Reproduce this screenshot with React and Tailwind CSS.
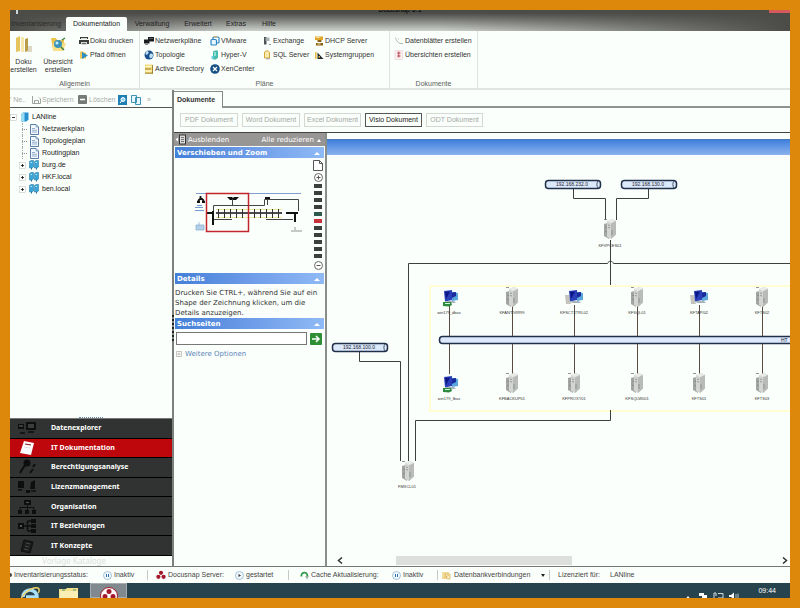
// App.jsx
import React from 'react';

const PageIcon = ({ className = 'h-[11px] w-[9px]' }) => (
  <svg className={className} viewBox="0 0 9 11">
    <path d="M.5.5h5.5l2.500 2.500v7.500H.5z" fill="#f2f8ff" stroke="#4a6f9c" strokeWidth=".9" />
    <path d="M6 .5V3h2.500M2 4.500h3M2 6.200h5M2 8h5" fill="none" stroke="#6f8fb5" strokeWidth=".7" />
  </svg>
);

const DomainIcon = () => (
  <svg className="h-[10px] w-[10px]" viewBox="0 0 10 10">
    <path d="M.5 1.500 2 .5h2.500v6.500L3 8H.5z" fill="#3aa6d8" stroke="#1d6fa0" strokeWidth=".5" />
    <path d="M5.500 1.500 7 .5h2.500v6.500L8 8H5.500z" fill="#3aa6d8" stroke="#1d6fa0" strokeWidth=".5" />
    <path d="M1.500 2.500h1.500M6.500 2.500H8" stroke="#c9f0ff" strokeWidth=".9" />
    <path d="M2.500 8v1.500M7.500 8v1.500" stroke="#2b6b90" />
  </svg>
);

const RootIcon = () => (
  <svg className="h-[10px] w-[9px]" viewBox="0 0 9 10">
    <path d="M1 2.500 3 .5h5.500v7l-2 2H1z" fill="#2791cf" />
    <path d="M1 2.500 3 .5h1.500v9H1z" fill="#9bdcf5" />
  </svg>
);

// small ribbon icons, all on a 10x10 grid
const ribbonIcons = {
  print: (
    <>
      <path d="M1 1h8v2H1zM0 4h10v4H0z" fill="#3b3f3c" />
      <path d="M2 2h6v1.200H2zM2 6h6v3H2z" fill="#d5dad6" />
      <path d="M3 7.500h4" stroke="#333" strokeWidth=".7" />
    </>
  ),
  path: (
    <>
      <path d="M1 1.500h3l1 1h2v6H1z" fill="#e9c75a" />
      <path d="m3 2 6 3.500L3 9z" fill="#2c8fc4" />
    </>
  ),
  network: (
    <>
      <path d="M4 1h6v4.500H4zM0 3.500h5.500V7.500H0z" fill="#1a1e1e" />
      <path d="M1 8.500h3" stroke="#8a9090" />
      <path d="M5 2h4v1H5z" fill="#565f66" />
    </>
  ),
  globe: (
    <>
      <circle cx="5" cy="5" r="4.500" fill="#16508f" />
      <path d="M3 1c2 0 2 2 1 3S1.500 5 1.500 4 2 1.500 3 1M6 4c2-1 3 0 3 1.500S7 9 6 8s-1-3 0-4" fill="#bfe0f2" />
    </>
  ),
  directory: (
    <>
      <path d="M1 .5h7.500v9H1z" fill="#f3d873" />
      <path d="M1 9.200h8M8.500 1v8.500M1 5h6" stroke="#8a6d1b" strokeWidth=".8" />
      <path d="M1.500 2.500h6M1.500 7h6" stroke="#fff7cf" strokeWidth="1.500" />
    </>
  ),
  vmware: (
    <>
      <rect x="3" y="1" width="6" height="6" rx="1" fill="none" stroke="#2c86c3" strokeWidth="1.200" />
      <rect x="1" y="3.500" width="5.500" height="5.500" rx="1" fill="#eaf6ff" stroke="#2c86c3" strokeWidth="1.200" />
      <path d="M4 .8h3" stroke="#e2a23b" />
    </>
  ),
  hyperv: (
    <>
      <path d="M3 1.500 5 .5h3v7l-2 2H3z" fill="#45bcae" />
      <path d="M4 3h2M4 5h2" stroke="#dffcf7" />
      <path d="M1.500 6h2v3h-2z" fill="#6fd0e6" />
    </>
  ),
  xen: (
    <>
      <circle cx="5" cy="5" r="4.800" fill="#164f84" />
      <path d="m3 3 4 4M7 3 3 7" stroke="#fff" strokeWidth="1.300" />
    </>
  ),
  exchange: (
    <>
      <path d="M2 1h2.500v7.500H2z" fill="#4c5254" />
      <path d="M4.500 1.500h3V5h-3z" fill="#aab2b5" />
      <path d="M3 2.500h1M3 4h1M7 8.500h2" stroke="#8d9598" />
    </>
  ),
  sql: (
    <>
      <path d="M3 1.500C5 .2 7 .8 7.500 2.500V8H2.500V3z" fill="#fbe9ae" stroke="#d2a637" />
      <path d="M4 8.800h4" stroke="#9aa0a0" />
    </>
  ),
  dhcp: (
    <>
      <path d="M1 .5h8v3.500H1z" fill="#e0a62b" />
      <path d="M3.500 4h4v2h-4zM2 7h7v2.500H2z" fill="#8d6115" />
      <path d="M2.500 1.500h3M3.500 8h3" stroke="#fff0b8" strokeWidth=".9" />
    </>
  ),
  groups: (
    <>
      <path d="M1 2h1.500v7H1z" fill="#e5b93d" />
      <path d="M3.500 2.500 9.500 9h-6z" fill="#23282b" />
      <path d="M4.500 6h1.500v1.500H4.500z" fill="#e5b93d" />
    </>
  ),
  sheet: <path d="M1.500 1.500c.5 2.500 2 5 4.500 6h3M4 3h1" fill="none" stroke="#a9b1ad" strokeWidth=".9" />,
  overview: (
    <>
      <path d="M1 .5h7.500v9H1z" fill="#fbeff0" stroke="#e3c7c9" strokeWidth=".5" />
      <path d="M4.800 1.500v6M3 3h3.500M3 6h3.500" stroke="#c0535c" strokeWidth="1.100" />
    </>
  ),
};

const RibbonItem = ({ icon, label }) => (
  <button type="button" className="flex h-[14px] items-center gap-px whitespace-nowrap">
    <svg className="h-[10px] w-[10px] shrink-0" viewBox="0 0 10 10">{ribbonIcons[icon]}</svg>
    {label}
  </button>
);

const RibbonGroup = ({ title, className, children }) => (
  <section className={`flex flex-col justify-between border-r border-[#dfe3df] pt-[3px] ${className}`}>
    <div className="flex">{children}</div>
    <h2 className="text-center leading-2 text-[#5c615e]">{title}</h2>
  </section>
);

const Ribbon = () => (
  <div className="flex h-[59px] shrink-0 border-b-2 border-[#e1e5e1] text-[#333]">
    <RibbonGroup title="Allgemein" className="w-[130px]">
      <button type="button" className="flex w-[27px] flex-col items-center leading-2">
        <svg className="mb-1 h-[20px] w-[18px]" viewBox="0 0 18 20">
          <path d="M1 4l4-2v15l-4 1z" fill="#e5c45b" />
          <path d="M6 3h3v15H6z" fill="#f7e7ab" />
          <path d="M10 5l3-1v13l-3 1z" fill="#b99d48" />
          <path d="M13 12h4v6h-4z" fill="#dcd8c4" />
        </svg>
        Doku erstellen
      </button>
      <button type="button" className="ml-1 flex w-[34px] flex-col items-center leading-2">
        <svg className="mb-1 h-[20px] w-[18px]" viewBox="0 0 18 20">
          <path d="M2 4h5l1 2h7v10H4z" fill="#edc24a" />
          <path d="M4 9h13l-3 8H4z" fill="#f9df86" />
          <circle cx="9" cy="10" r="4" fill="#3c93b8" />
          <circle cx="8" cy="9" r="1.500" fill="#c9eefa" />
          <path d="m12 13 3 3M13 6l3-2" stroke="#3e7d42" strokeWidth="1.500" />
        </svg>
        Übersicht erstellen
      </button>
      <div className="ml-1">
        <RibbonItem icon="print" label="Doku drucken" />
        <RibbonItem icon="path" label="Pfad öffnen" />
      </div>
    </RibbonGroup>
    <RibbonGroup title="Pläne" className="w-[250px]">
      <div className="ml-1 w-[66px]">
        <RibbonItem icon="network" label="Netzwerkpläne" />
        <RibbonItem icon="globe" label="Topologie" />
        <RibbonItem icon="directory" label="Active Directory" />
      </div>
      <div className="w-[52px]">
        <RibbonItem icon="vmware" label="VMware" />
        <RibbonItem icon="hyperv" label="Hyper-V" />
        <RibbonItem icon="xen" label="XenCenter" />
      </div>
      <div className="w-[52px]">
        <RibbonItem icon="exchange" label="Exchange" />
        <RibbonItem icon="sql" label="SQL Server" />
      </div>
      <div>
        <RibbonItem icon="dhcp" label="DHCP Server" />
        <RibbonItem icon="groups" label="Systemgruppen" />
      </div>
    </RibbonGroup>
    <RibbonGroup title="Dokumente" className="w-[88px]">
      <div className="ml-1">
        <RibbonItem icon="sheet" label="Datenblätter erstellen" />
        <RibbonItem icon="overview" label="Übersichten erstellen" />
      </div>
    </RibbonGroup>
  </div>
);

const TitleBar = () => (
  <header className="relative flex h-[21px] shrink-0 items-end overflow-hidden bg-[linear-gradient(to_right,#4b4b48_0%,transparent_30%,transparent_55%,#4b4b48_100%),linear-gradient(to_bottom,#4b4b48_15%,#ced2cd)] text-[#222]">
    <span className="absolute inset-x-0 -top-1 text-center leading-2 text-black">Docusnap 6.1</span>
    <span className="absolute top-0 left-[6px] h-1 w-0.5 bg-[#c9d6da]" />
    <span className="absolute top-0 right-0 h-[3px] w-[21px] bg-[#d65a5a]" />
    <nav className="flex h-[14px] items-center leading-[14px]">
      <button type="button" className="-ml-1 w-[60px] text-[#2a2a2a]">Inventarisierung</button>
      <button type="button" className="w-[61px] rounded-t-xs bg-[#fbfffb]">Dokumentation</button>
      <button type="button" className="w-[50px]">Verwaltung</button>
      <button type="button" className="w-[42px]">Erweitert</button>
      <button type="button" className="w-[34px]">Extras</button>
      <button type="button" className="w-[32px]">Hilfe</button>
    </nav>
  </header>
);

const Expander = ({ open }) => (
  <svg className="h-[7px] w-[7px] shrink-0" viewBox="0 0 7 7">
    <rect x=".5" y=".5" width="6" height="6" fill="#fff" stroke="#c3c9c5" strokeWidth=".6" />
    <path d={open ? 'M2 3.500h3' : 'M2 3.500h3M3.500 2v3'} stroke="#222" strokeWidth=".9" />
  </svg>
);

const Tree = () => (
  <ul className="flex-1 overflow-hidden pt-[3px] text-[#222]">
    <li className="flex h-3 items-center gap-[3px]">
      <Expander open />
      <RootIcon />
      LANline
    </li>
    {['Netzwerkplan', 'Topologieplan', 'Routingplan'].map((name) => (
      <li key={name} className="flex h-3 items-center pl-[12px]">
        <span className="h-3 w-[5px] border-l border-dotted border-[#aaa]" />
        <span className="mr-[3px] -ml-[5px] w-[5px] border-t border-dotted border-[#888]" />
        <PageIcon />
        <span className="ml-[3px]">{name}</span>
      </li>
    ))}
    {['burg.de', 'HKF.local', 'ben.local'].map((name) => (
      <li key={name} className="flex h-3 items-center gap-[3px] pl-[9px]">
        <Expander />
        <DomainIcon />
        {name}
      </li>
    ))}
  </ul>
);

const navIcons = {
  explorer: (
    <>
      <path d="M8 2h10v8H8zM0 4h6v5H0z" fill="#0d0f0e" />
      <path d="M10 4h6v4h-6zM1 5h4v2H1z" fill="#3a3e3b" />
      <path d="M10 12h6M2 13h5" stroke="#0d0f0e" strokeWidth="1.500" />
    </>
  ),
  docu: (
    <>
      <path d="m6 1 10 2-3 12-11-2z" fill="#fff" />
      <path d="m7 4 6 1" stroke="#7b1518" />
      <path d="m6 7 6 1" stroke="#ddd" />
    </>
  ),
  keys: (
    <>
      <circle cx="9" cy="4" r="2.500" fill="#0d0f0e" stroke="#0d0f0e" strokeWidth="2" />
      <path d="m7 6-5 8M15 8l2-3M12 14l3-4" stroke="#0d0f0e" strokeWidth="2" />
    </>
  ),
  licence: (
    <>
      <path d="M0 2h6v7H0zM13 3l4-2v9h-5zM8 11h4v3H8z" fill="#0d0f0e" />
      <path d="M0 11h4M13 12h5" stroke="#0d0f0e" strokeWidth="1.500" />
    </>
  ),
  org: (
    <>
      <path d="M6 1h7v5H6zM0 11h4v4H0zM7 11h4v4H7zM14 11h4v4h-4z" fill="#0d0f0e" />
      <path d="M9.500 6v5M2 11V8.500h14V11" fill="none" stroke="#0d0f0e" />
      <path d="M8 3h3v1H8z" fill="#555" />
    </>
  ),
  relations: (
    <>
      <path d="M0 5h6v6H0zM13 1h5v4h-5zM13 6h5v4h-5zM13 11h5v4h-5z" fill="#0d0f0e" />
      <path d="M6 8h7M9.500 3v10M9.500 3H13M9.500 13H13" fill="none" stroke="#0d0f0e" strokeWidth="1.500" />
      <path d="M2 7h2v2H2z" fill="#555" />
    </>
  ),
  concepts: (
    <>
      <path d="m6 2 9 2-3 11-9-2z" fill="#1a1c1b" stroke="#0d0f0e" />
      <path d="m8 5 4 1M7 8l4 1M6 11l4 1" stroke="#4a4e4b" />
    </>
  ),
};

const modules = [
  { icon: 'explorer', label: 'Datenexplorer' },
  { icon: 'docu', label: 'IT Dokumentation', active: true },
  { icon: 'keys', label: 'Berechtigungsanalyse' },
  { icon: 'licence', label: 'Lizenzmanagement' },
  { icon: 'org', label: 'Organisation' },
  { icon: 'relations', label: 'IT Beziehungen' },
  { icon: 'concepts', label: 'IT Konzepte' },
];

const Sidebar = () => (
  <aside className="flex w-[162px] shrink-0 flex-col overflow-hidden">
    <div className="flex h-[18px] shrink-0 items-center border-b border-[#555] pt-0.5 text-[#a8aca9]">
      <button type="button" className="w-[22px] text-left">' Ne..</button>
      <button type="button" className="flex w-[46px] items-center gap-px">
        <svg className="h-[9px] w-[9px]" viewBox="0 0 9 9">
          <path d="M.5 1v7.500h8V4L7 2.500M2.500 8.500V5.500h4v3" fill="none" stroke="#9fa4a1" />
        </svg>
        Speichern
      </button>
      <button type="button" className="flex w-[40px] items-center gap-0.5">
        <svg className="h-[9px] w-[9px]" viewBox="0 0 9 9">
          <rect width="9" height="9" rx="1" fill="#767b78" />
          <path d="M2 4.500h5" stroke="#fff" strokeWidth="1.500" />
        </svg>
        Löschen
      </button>
      <button type="button" aria-label="Suchen">
        <svg className="h-[10px] w-[9px]" viewBox="0 0 9 10">
          <rect width="9" height="10" fill="#1f7fb5" />
          <circle cx="5" cy="4.500" r="2" fill="#8fd2f2" stroke="#fff" />
          <path d="M3.500 6 2 8" stroke="#fff" />
        </svg>
      </button>
      <button type="button" aria-label="Kopieren" className="ml-1">
        <svg className="h-[10px] w-[10px]" viewBox="0 0 10 10">
          <path d="M.5.5h5v7h-5zM4.500 2.500h5v7h-5z" fill="#e8f6fb" stroke="#3d93b5" />
        </svg>
      </button>
      <span className="ml-1.5">»</span>
    </div>
    <Tree />
    <div className="mx-auto h-[3px] w-[24px] shrink-0 border-b border-dotted border-[#5f8fb0]" />
    <nav className="grid h-[138px] shrink-0 grid-rows-7 border-t border-[#777] bg-[#303332] font-['Noto_Sans','Open_Sans',sans-serif] font-bold text-white">
      {modules.map(({ icon, label, active }) => (
        <button
          key={label}
          type="button"
          className={`flex items-center gap-[15px] border-b border-black pl-2 text-left ${active ? 'bg-[#bd070d]' : ''}`}
        >
          <svg className="h-4 w-[18px]" viewBox="0 0 18 16">{navIcons[icon]}</svg>
          {label}
        </button>
      ))}
    </nav>
    <p className="h-[10px] shrink-0 pl-[32px] font-['Noto_Sans',sans-serif] text-[8px] leading-[10px] text-[#dbe0dc]">Vorlage Kataloge</p>
  </aside>
);

const SectionHeader = ({ title }) => (
  <button
    type="button"
    className="flex h-[11px] w-full items-center justify-between bg-linear-to-r from-[#4380d8] via-[#6d9be8] to-[#8fbaf5] px-0.5 font-bold text-white"
  >
    {title}
    <svg className="mr-0.5 h-1 w-1.5" viewBox="0 0 6 4"><path d="m0 4 3-3 3 3z" fill="#fff" /></svg>
  </button>
);

const Minimap = () => (
  <svg className="mt-[33px] ml-[19px] h-[44px] w-[110px]" viewBox="0 0 110 44">
    <path d="M2 2.500h105" stroke="#7f9fd0" />
    <path d="M6.500 5v3M3 11h3M8 11h3M4 10l2-2h2l2 2" fill="none" stroke="#111" strokeWidth="1.800" />
    <path d="M1 16.500h8M1 19.500h9M3 14.500h5" stroke="#6f9bd0" />
    <path d="M2 34h8v5H2zM5 31v4" fill="#b5cfe8" stroke="#8db3d6" strokeWidth=".8" />
    <path d="M33 6h5l1 1 1-1h5l-3 3h-6z" fill="#111" />
    <path d="M71 6h5v2h-5z" fill="#111" />
    <path d="M38.500 8v6M19.500 22v-7.500h51V8.500h34V20M20 28.500h18M72 28.500h27M73.500 8v6" fill="none" stroke="#444" />
    <path d="M22 18.500h66M22 26.500h66" stroke="#efe9a0" />
    <path d="M22 22h66" stroke="#111" strokeWidth="1.500" />
    <path
      d="M24.500 18v9M30.500 18v9M36.500 18v9M42.500 18v9M48.500 18v9M54.500 18v9M60.500 18v9M66.500 18v9M72.500 18v9M78.500 18v9M84.500 18v9"
      stroke="#333"
    />
    <path d="M12 22h7M19 20v14M92 22h12M101 22v9" stroke="#111" strokeWidth="2" />
    <path d="M97 40h11M101 36v3" stroke="#777" strokeWidth=".8" />
    <rect x="12.500" y="2.500" width="42" height="38" fill="none" stroke="#c2252c" strokeWidth="1.500" />
  </svg>
);

const ZoomControl = () => (
  <div className="flex w-[12px] flex-col items-center pt-0.5">
    <svg className="h-[11px] w-[10px]" viewBox="0 0 10 11">
      <path d="M.5.5h6l3 3v7h-9zM6.500.5v3h3" fill="#fff" stroke="#555" />
    </svg>
    <button type="button" aria-label="Vergrößern" className="mt-0.5 mb-0.5">
      <svg className="h-[9px] w-[9px]" viewBox="0 0 9 9">
        <circle cx="4.500" cy="4.500" r="4" fill="#fff" stroke="#666" />
        <path d="M2.500 4.500h4M4.500 2.500v4" stroke="#555" />
      </svg>
    </button>
    {Array.from({ length: 11 }, (_, i) => (
      <span key={i} className={`mb-[3px] h-1 w-2 ${i === 5 ? 'bg-[#c8323a]' : i === 4 ? 'bg-[#2d5a4c]' : 'bg-[#3c3f3d]'}`} />
    ))}
    <button type="button" aria-label="Verkleinern">
      <svg className="h-[9px] w-[9px]" viewBox="0 0 9 9">
        <circle cx="4.500" cy="4.500" r="4" fill="#fff" stroke="#666" />
        <path d="M2.500 4.500h4" stroke="#555" />
      </svg>
    </button>
  </div>
);

const NavigatorPanel = () => (
  <div className="flex w-[153px] shrink-0 flex-col border-r-2 border-[#8a8e8b] font-['DejaVu_Sans',sans-serif] text-[#333]">
    <div className="flex h-[13px] items-center justify-between bg-[#989595] pr-1 pl-px text-white">
      <button type="button" className="flex items-center gap-0.5">
        <svg className="h-[11px] w-[11px]" viewBox="0 0 11 11">
          <path d="m3 3.500-2.500 2L3 7.500z" fill="#fff" />
          <rect x="4.500" y="1" width="6" height="9" fill="#ddd" stroke="#333" />
          <path d="M6 3.500h3M6 5.500h3M6 7.500h3" stroke="#555" strokeWidth=".8" />
        </svg>
        Ausblenden
      </button>
      <button type="button" className="flex items-center gap-[3px]">
        Alle reduzieren
        <svg className="h-1 w-1" viewBox="0 0 4 4"><path d="m0 4 2-3 2 3z" fill="#fff" /></svg>
      </button>
    </div>
    <div className="pt-px pr-px pl-px">
      <SectionHeader title="Verschieben und Zoom" />
      <div className="flex h-[115px] justify-between">
        <Minimap />
        <ZoomControl />
      </div>
      <SectionHeader title="Details" />
      <p className="h-[34px] overflow-hidden pt-1 leading-[10px] whitespace-nowrap">
        Drucken Sie CTRL+, während Sie auf ein
        <br />
        Shape der Zeichnung klicken, um die
        <br />
        Details anzuzeigen.
      </p>
      <SectionHeader title="Suchseiten" />
      <form className="flex items-center gap-[3px] pt-[3px] pl-px">
        <input aria-label="Suchseiten" className="h-[13px] w-[131px] border border-[#777] bg-white px-0.5" />
        <button type="button" aria-label="Suchen">
          <svg className="h-[12px] w-[12px]" viewBox="0 0 12 12">
            <rect width="12" height="12" rx="1" fill="#2f8f34" />
            <path d="M2 6h7M6 3l3 3-3 3" fill="none" stroke="#fff" strokeWidth="1.500" />
          </svg>
        </button>
      </form>
      <a href="#optionen" className="mt-1 flex items-center gap-[3px] pl-px text-[#5b86b8]">
        <svg className="h-[6px] w-[6px]" viewBox="0 0 6 6">
          <path d="M.5.5h5v5h-5zM3 1.500v3M1.500 3h3" fill="none" stroke="#b0a9a4" strokeWidth=".7" />
        </svg>
        Weitere Optionen
      </a>
    </div>
  </div>
);

const Server = ({ x, y }) => (
  <g transform={`translate(${x - 6} ${y})`}>
    <path d="M0 5 5 3.500V20L0 17z" fill="#a3a5a3" />
    <path d="M3 2 8 0l4 1.500v14L7 20l-4-2z" fill="#d3d5d3" />
    <path d="M7 4.500 12 2v13.500L7 20z" fill="#b9bbb9" />
    <path d="M3 2 8 0l4 1.500-5 2.500z" fill="#e9ebe9" />
    <path d="M4 6l2 .5M4 8.500l2 .5M1 8l2 .5M1 12l2 1M8 11v5" stroke="#858885" strokeWidth=".8" />
    <path d="M0 .5h3" stroke="#777" strokeWidth=".8" />
  </g>
);

const Workstation = ({ x, y, green }) => (
  <g transform={`translate(${x - 8} ${y})`}>
    {!green && <path d="M-1 6h4l2 9H0z" fill="#c4c4bd" />}
    <path d="M10 2.500 17 4v7l-6 1z" fill="#5ba7dc" />
    <path d="M3 2 11 1v10l-7 1.500z" fill="#2a3fb8" />
    <path d="M4 3l5-.5L5 10z" fill="#0d1686" />
    <path d="M11 3.500 15 3v4l-4 2z" fill="#1a2a9c" />
    <path d="M4 12h9l2 2H6z" fill="#aab4bd" />
    {green && <path d="M2 13h8l1 3-3 1.500-6-.5z" fill="#2c8a3e" />}
    {green && <path d="M4 14.500h5" stroke="#d8f3dc" />}
  </g>
);

const Subnet = ({ x, y, label }) => (
  <g>
    <rect x={x + 0.5} y={y + 0.5} width="55" height="8" rx="3" fill="#dbe9fa" stroke="#20304a" strokeWidth="1.500" />
    <path d={`M${x + 53} ${y + 1}c-1.500 2-1.500 5 0 7`} fill="none" stroke="#20304a" strokeWidth=".8" />
    <text x={x + 27} y={y + 6} textAnchor="middle" className="fill-[#223] text-[5px]">{label}</text>
  </g>
);

const columns = [
  { x: 122, top: 'win179_dbas', bottom: 'win179_fbas', pcTop: true, pcBottom: true, green: true },
  { x: 185, top: 'KFANTIVIR99', bottom: 'KFBACKUP01' },
  { x: 247, top: 'KFSCTXTRL02', bottom: 'KFPROXY01', pcTop: true },
  { x: 310, top: 'KFSQL01', bottom: 'KFSQLW001' },
  { x: 372, top: 'KFTAPI02', bottom: 'KFTS01', pcTop: true },
  { x: 435, top: 'KFTS02', bottom: 'KFTS03' },
];

const NetworkDiagram = () => (
  <svg className="h-0 min-h-0 w-full flex-1 overflow-hidden">
    <rect x="103" y="131" width="2000" height="125" fill="none" stroke="#ffffd2" strokeWidth="2" />
    <g fill="none" stroke="#3c3f3d">
      <path d="M246.500 33v10.500h32V65M321.500 33v10.500h-32V65" />
      <path d="M283.500 85v45M81.500 306V108.500h199c1-3 5-3 6 0H2000" />
      <path d="M32.500 197v9.500h41V306M88.500 306V265.500h195V255" />
    </g>
    <Subnet x={218} y={25} label="192.168.232.0" />
    <Subnet x={294} y={25} label="192.168.130.0" />
    <Subnet x={5} y={188} label="192.168.100.0" />
    <Server x={283} y={64} />
    <text x="283" y="92" textAnchor="middle" className="fill-[#333] text-[4px]">KFVPCES01</text>
    <Server x={81} y={306} />
    <text x="80" y="333" textAnchor="middle" className="fill-[#333] text-[4px]">FMXCL01</text>
    <rect x="112.500" y="181.500" width="2000" height="7" rx="3" fill="#dbe9fa" stroke="#20304a" strokeWidth="1.500" />
    <text x="454" y="187" className="fill-[#223] text-[5px]">HT</text>
    {columns.map(({ x, top, bottom, pcTop, pcBottom, green }) => (
      <g key={x}>
        <path d={`M${x + 0.5} 150v31M${x + 0.5} 189v30`} stroke="#5a4a40" />
        {pcTop ? <Workstation x={x} y={134} green={green} /> : <Server x={x} y={132} />}
        {pcBottom ? <Workstation x={x} y={220} green={green} /> : <Server x={x} y={218} />}
        <text x={x} y="159" textAnchor="middle" className="fill-[#333] text-[4px]">{top}</text>
        <text x={x} y="245" textAnchor="middle" className="fill-[#333] text-[4px]">{bottom}</text>
      </g>
    ))}
  </svg>
);

const formats = [
  { label: 'PDF Dokument', width: 'w-[58px]' },
  { label: 'Word Dokument', width: 'w-[58px]' },
  { label: 'Excel Dokument', width: 'w-[57px]' },
  { label: 'Visio Dokument', width: 'w-[57px]', active: true },
  { label: 'ODT Dokument', width: 'w-[57px]' },
];

const Documents = () => (
  <main className="flex min-w-0 flex-1 flex-col">
    <div className="flex h-[18px] shrink-0 items-end border-b-2 border-[#8f948f]">
      <button type="button" className="-mb-0.5 h-[17px] w-[49px] border-t border-r border-[#888] bg-[#fbfffb] pr-1 text-center font-bold text-[#333]">
        Dokumente
      </button>
    </div>
    <div className="flex h-[25px] shrink-0 items-center gap-1 border-b border-[#444] pl-1.5">
      {formats.map(({ label, width, active }) => (
        <button
          key={label}
          type="button"
          className={`h-[14px] border whitespace-nowrap ${width} ${active ? 'border-[#555] text-[#222]' : 'border-[#d3d8d3] text-[#a3a8a4]'}`}
        >
          {label}
        </button>
      ))}
    </div>
    <div className="flex min-h-0 flex-1">
      <NavigatorPanel />
      <div className="flex min-w-0 flex-1 flex-col">
        <div className="mt-1.5 h-[16px] shrink-0 border-t border-[#4b79b5] bg-linear-to-b from-[#3f80de] to-[#8ab2ee]" />
        <NetworkDiagram />
        <div className="flex h-[11px] shrink-0 items-center justify-between pr-0.5 pl-2.5">
          <svg className="h-[7px] w-[6px]" viewBox="0 0 6 7"><path d="M5 .5 1.500 3.500 5 6.500" fill="none" stroke="#333" strokeWidth="1.500" /></svg>
          <div className="mr-auto ml-[53px] h-[9px] w-[39%] bg-[#dcdfdb]" />
          <svg className="h-[7px] w-[6px]" viewBox="0 0 6 7"><path d="M1 .5 4.500 3.500 1 6.500" fill="none" stroke="#333" strokeWidth="1.500" /></svg>
        </div>
      </div>
    </div>
  </main>
);

const StateIcon = ({ playing }) => (
  <svg className="h-[9px] w-[9px] shrink-0" viewBox="0 0 9 9">
    <circle cx="4.500" cy="4.500" r="4" fill="#f3faff" stroke="#8fb2cc" strokeWidth=".8" />
    {playing ? <path d="m3.500 3 2.500 1.500L3.500 6z" fill="#333" /> : <path d="M3.500 3v3M5.500 3v3" stroke="#2c74b3" />}
  </svg>
);

const DocusnapIcon = ({ className }) => (
  <svg className={className} viewBox="0 0 10 10">
    <circle cx="5" cy="2.800" r="2.100" fill="#a3182a" />
    <circle cx="2.400" cy="6.800" r="2.100" fill="#a3182a" />
    <circle cx="7.600" cy="6.800" r="2.100" fill="#a3182a" />
  </svg>
);

const StatusBar = () => (
  <footer className="flex h-[17px] shrink-0 items-center overflow-hidden border-t border-[#777] whitespace-nowrap text-[#444]">
    <div className="flex w-[137px] items-center gap-0.5">
      <span className="-ml-0.5 h-1 w-1 rounded-full bg-[#444]" />
      <span className="w-[87px]">Inventarisierungsstatus:</span>
      <StateIcon />
      Inaktiv
    </div>
    <div className="flex w-[141px] items-center gap-0.5 border-l border-[#c5cac6] pl-2">
      <DocusnapIcon className="h-[10px] w-[10px]" />
      <span className="w-[65px]">Docusnap Server:</span>
      <StateIcon playing />
      gestartet
    </div>
    <div className="flex w-[149px] items-center gap-0.5 border-l border-[#c5cac6] pl-[11px]">
      <svg className="h-[9px] w-[9px]" viewBox="0 0 9 9">
        <path d="M1.500 5.500A3 3 0 1 1 7 6" fill="none" stroke="#2f9a4a" strokeWidth="1.800" />
        <path d="M5 5h4L7 8.500z" fill="#9fb5a5" />
      </svg>
      <span className="w-[79px]">Cache Aktualisierung:</span>
      <StateIcon />
      Inaktiv
    </div>
    <div className="flex w-[112px] items-center gap-[3px] border-l border-[#c5cac6] pl-1">
      <svg className="h-[9px] w-[9px]" viewBox="0 0 9 9">
        <path d="M0 1h7v7H0z" fill="#f3dc9a" />
        <path d="M2 7 7 4M3 3h5v5H5z" fill="#f7edc9" stroke="#d8ac4b" strokeWidth=".7" />
      </svg>
      <span className="w-[84px]">Datenbankverbindungen</span>
      <svg className="h-[3px] w-1" viewBox="0 0 4 3"><path d="M0 0h4L2 3z" fill="#222" /></svg>
    </div>
    <div className="flex gap-1.5 border-l border-[#c5cac6] pl-2">
      <span className="w-[46px]">Lizenziert für:</span>
      <span>LANline</span>
    </div>
  </footer>
);

const Taskbar = () => (
  <div className="flex h-[15px] shrink-0 items-start overflow-hidden bg-[#27434d] text-white">
    <svg className="mt-[3px] ml-[10px] h-5 w-5 shrink-0" viewBox="0 0 20 20">
      <path d="M3 11a7 7 0 0 1 14 0H6" fill="none" stroke="#a9dff7" strokeWidth="3.500" />
      <path d="M1 14C2 8 12 0 18 2c2 1 1 4 0 5" fill="none" stroke="#f0d264" strokeWidth="1.500" />
    </svg>
    <svg className="mt-[3px] ml-[19px] h-5 w-5 shrink-0" viewBox="0 0 20 20">
      <path d="M0 3h7l1-1h11v16H0z" fill="#f3e08c" />
      <path d="M1 5h18v13H1z" fill="#f9efb4" />
      <path d="M3 4h3M14 4h3" stroke="#4f9a6a" />
    </svg>
    <div className="ml-[11px] flex h-[15px] w-[37px] shrink-0 items-start justify-center border border-[#a5acb0] bg-[#7f898f]">
      <svg className="mt-[3px] h-[18px] w-[18px] shrink-0" viewBox="0 0 18 18">
        <circle cx="9" cy="9" r="8.500" fill="#fff" stroke="#a3182a" />
        <circle cx="9" cy="4.500" r="2.500" fill="#a3182a" />
        <circle cx="5" cy="9.500" r="2.500" fill="#a3182a" />
        <circle cx="13" cy="9.500" r="2.500" fill="#a3182a" />
      </svg>
    </div>
    <svg className="mt-[9px] ml-auto h-[8px] w-[54px] shrink-0" viewBox="0 0 54 8">
      <path d="m0 6.500 2-2.500 2 2.500z" fill="#fff" />
      <path d="M13 1h5v3h-5zM16 3h5v3h-5z" fill="#fff" />
      <path d="M28 1v5M28 1h2v3M32 1.500h5V6h-5" fill="none" stroke="#d5dde0" />
      <path d="M43 3h2l3-2.500V7l-3-2h-2z" fill="#fff" />
      <path d="M50 2v4M52 1.500v5" stroke="#d5dde0" strokeWidth=".8" />
    </svg>
    <time className="mt-1 mr-3.5 ml-[18px] leading-2">09:44</time>
  </div>
);

const App = () => {
  return (
    <div className="flex h-screen flex-col bg-[#dd880b] p-2.5 font-['Liberation_Sans',Arial,sans-serif] text-[7px] leading-[10px]">
      <div className="flex min-h-0 flex-1 flex-col overflow-hidden bg-[#fbfffb]">
        <TitleBar />
        <Ribbon />
        <div className="flex min-h-0 flex-1">
          <Sidebar />
          <div className="flex w-0.5 shrink-0 items-center bg-[#7d817e]">
            <div className="h-[26px] border-l-2 border-dotted border-[#222]" />
          </div>
          <Documents />
        </div>
        <StatusBar />
        <Taskbar />
      </div>
    </div>
  );
};

export default App;
